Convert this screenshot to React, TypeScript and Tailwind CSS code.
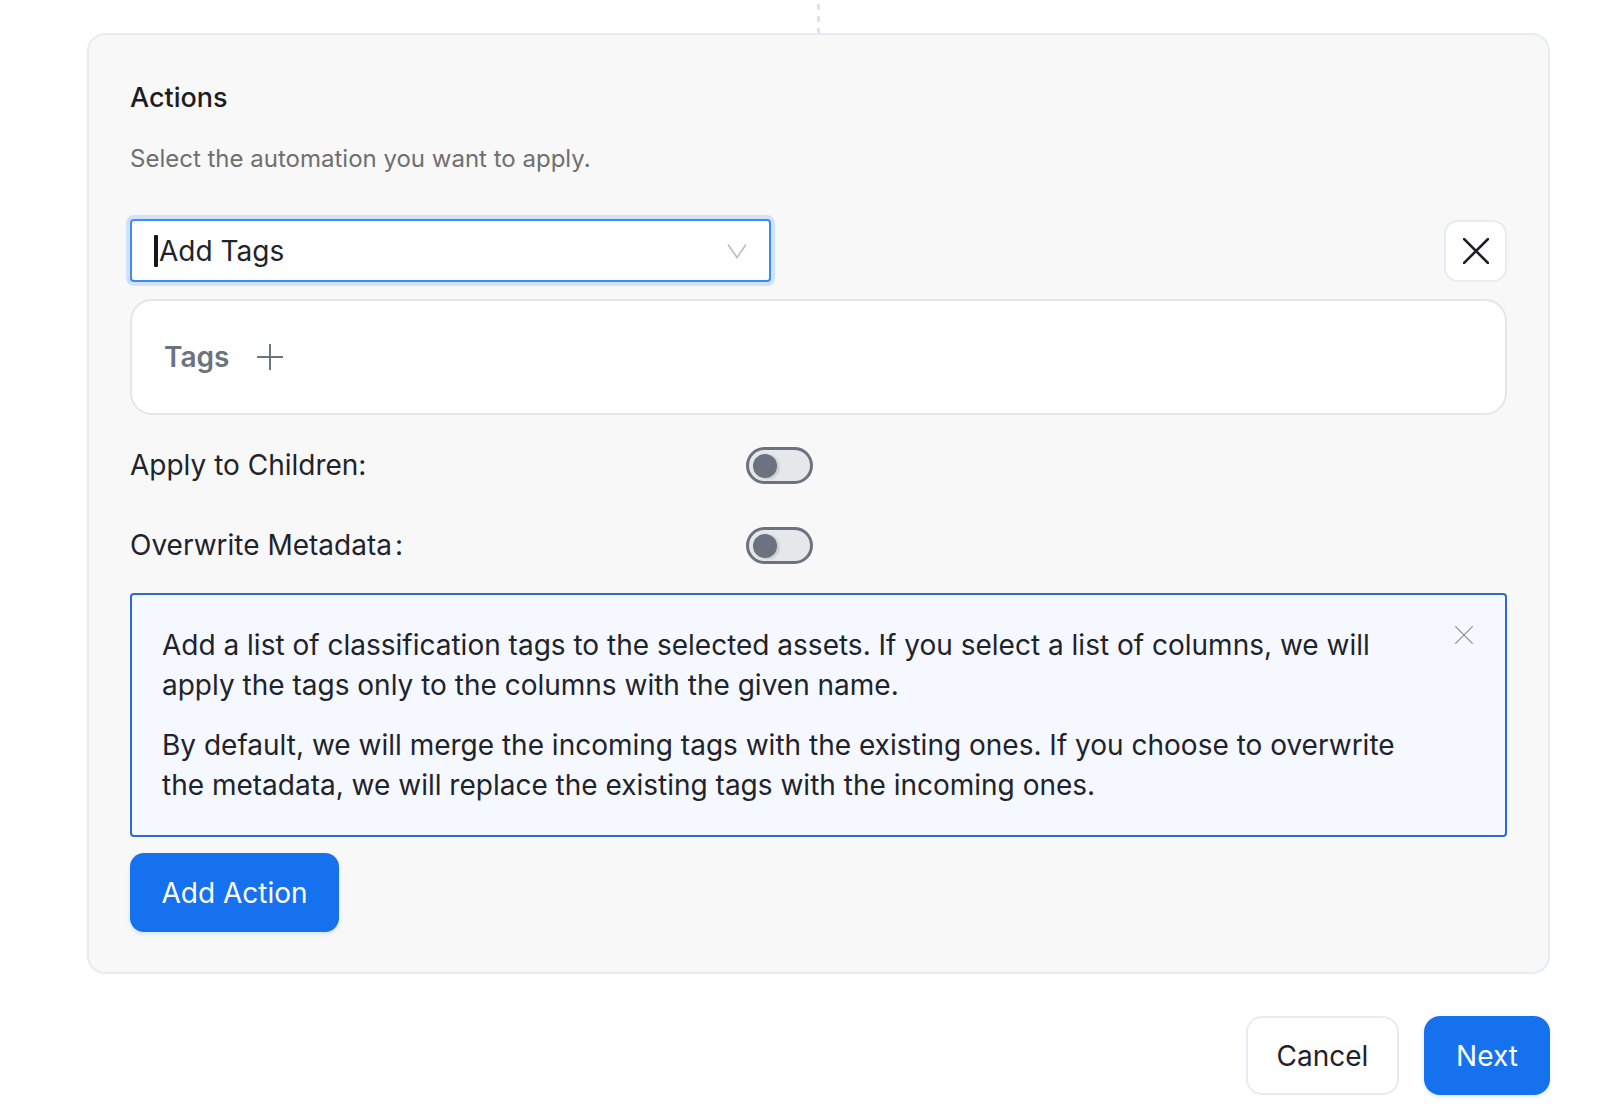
import { useState } from "react";

type ToggleRowProps = {
  label: string;
  spacedColon?: boolean;
  checked: boolean;
  onChange: (value: boolean) => void;
};

function ToggleRow({ label, spacedColon, checked, onChange }: ToggleRowProps) {
  return (
    <div className="flex items-center">
      <span className="w-[616px] text-[28px] leading-[37px] text-[#1f232b]">
        {label}
        <span className={spacedColon ? "ml-[3px]" : ""}>:</span>
      </span>
      <button
        type="button"
        role="switch"
        aria-checked={checked}
        onClick={() => onChange(!checked)}
        className="flex h-[37px] w-[67px] items-center rounded-full border-[3px] border-[#6b7280] bg-[#e5e7eb] px-[4px]"
      >
        <span className="h-[24px] w-[24px] rounded-full bg-[#6b7280] shadow-[2px_1px_3px_rgba(0,0,0,0.15)]" />
      </button>
    </div>
  );
}

function CrossIcon({ size, stroke, className }: { size: number; stroke: number; className?: string }) {
  return (
    <svg width={size} height={size} viewBox="0 0 26 26" className={className} fill="none">
      <path d="M1 1L25 25M25 1L1 25" stroke="currentColor" strokeWidth={stroke} strokeLinecap="square" />
    </svg>
  );
}

export default function App() {
  const [applyChildren, setApplyChildren] = useState(false);
  const [overwrite, setOverwrite] = useState(false);

  return (
    <div className="min-h-[1118px] bg-white font-['Inter',sans-serif]">
      <div className="ml-[87px] flex w-[1463px] flex-col">
        {/* connector from the previous step */}
        <div className="flex justify-center">
          <div className="mt-[4px] h-[29px] w-[3px] bg-[repeating-linear-gradient(to_bottom,#dfe2ec_0_6px,transparent_6px_12px)]" />
        </div>

        <section className="flex flex-col rounded-[18px] border-2 border-[#e8ebf5] bg-[#f8f8f8] px-[41px] pb-[40px] pt-[43px]">
          <h2 className="text-[27px] font-medium leading-[40px] text-[#1a1d24]">Actions</h2>
          <p className="mt-[24px] text-[24px] leading-[34px] text-[#6f6f6f]">
            Select the automation you want to apply.
          </p>

          <div className="mt-[43px] flex items-center justify-between">
            <div className="flex h-[63px] w-[641px] items-center justify-between rounded-[4px] border-2 border-[#3b8cf6] bg-white pl-[22px] pr-[22px] shadow-[0_0_0_4px_#d0e1fa]">
              <div className="flex items-center">
                <span className="mr-[1px] h-[32px] w-[4px] rounded-[1px] bg-[#15181e]" />
                <span className="text-[28px] leading-[36px] text-[#1f232b]">Add Tags</span>
              </div>
              <svg width="20" height="16" viewBox="0 0 20 16" fill="none" className="text-[#bdbdbd]">
                <path d="M1 1.5L10 14.5L19 1.5" stroke="currentColor" strokeWidth="1.6" />
              </svg>
            </div>
            <button
              type="button"
              className="flex h-[62px] w-[63px] items-center justify-center rounded-[14px] border-2 border-[#e8ebf5] bg-white text-[#1c1f27]"
            >
              <CrossIcon size={26} stroke={2.6} />
            </button>
          </div>

          <div className="mt-[17px] flex h-[116px] items-center rounded-[22px] border-2 border-[#e6e6e6] bg-white pl-[32px]">
            <span className="text-[28px] font-semibold leading-[36px] text-[#6b7280]">Tags</span>
            <svg width="26" height="26" viewBox="0 0 26 26" fill="none" className="ml-[28px] text-[#6b7280]">
              <path d="M13 0V26M0 13H26" stroke="currentColor" strokeWidth="2" />
            </svg>
          </div>

          <div className="mt-[32px] flex flex-col gap-[43px]">
            <ToggleRow label="Apply to Children" checked={applyChildren} onChange={setApplyChildren} />
            <ToggleRow label="Overwrite Metadata" spacedColon checked={overwrite} onChange={setOverwrite} />
          </div>

          <div className="relative mt-[29px] rounded-[4px] border-2 border-[#2d68d8] bg-[#f5f8ff] py-[30px] pl-[30px] pr-[86px]">
            <button type="button" className="absolute right-[32px] top-[31px] text-[#8a8a8a]">
              <CrossIcon size={18} stroke={1.6} />
            </button>
            <p className="text-[28px] leading-[40px] text-[#1f232b]">
              Add a list of classification tags to the selected assets. If you select a list of columns, we will
              apply the tags only to the columns with the given name.
            </p>
            <p className="mt-[20px] text-[28px] leading-[40px] text-[#1f232b]">
              By default, we will merge the incoming tags with the existing ones. If you choose to overwrite the
              metadata, we will replace the existing tags with the incoming ones.
            </p>
          </div>

          <div className="mt-[16px]">
            <button
              type="button"
              className="h-[79px] w-[209px] rounded-[14px] bg-[#1671ee] text-[28px] text-white shadow-[0_2px_4px_rgba(22,113,238,0.15)]"
            >
              Add Action
            </button>
          </div>
        </section>

        <div className="mt-[42px] flex justify-end gap-[25px]">
          <button
            type="button"
            className="h-[79px] w-[153px] rounded-[16px] border-2 border-[#e8ebf5] bg-white text-[28px] text-[#1f232b]"
          >
            Cancel
          </button>
          <button
            type="button"
            className="h-[79px] w-[126px] rounded-[16px] bg-[#1671ee] text-[28px] text-white shadow-[0_2px_4px_rgba(22,113,238,0.15)]"
          >
            Next
          </button>
        </div>
      </div>
    </div>
  );
}
